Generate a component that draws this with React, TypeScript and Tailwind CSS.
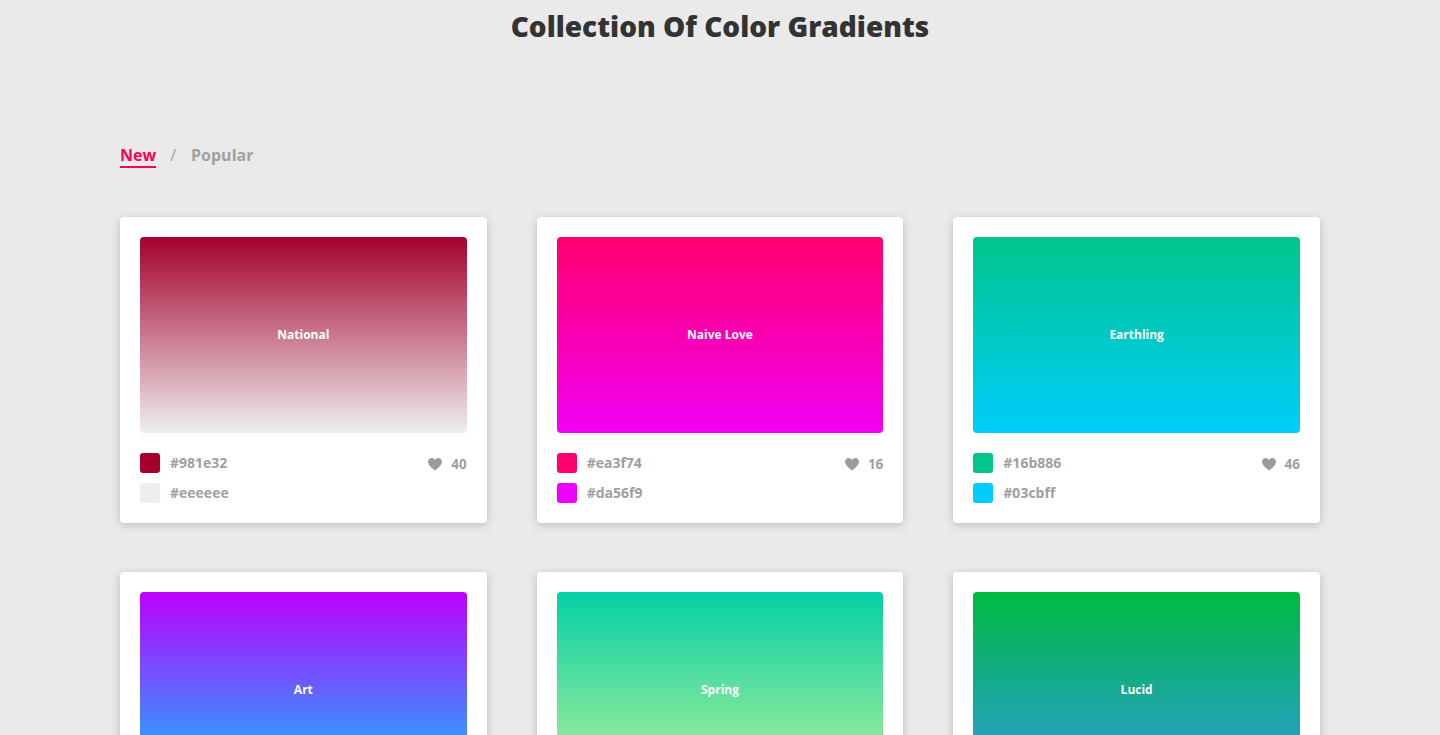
const cards = [
  { name: "National", from: "#a4002c", to: "#efefef", c1: "#981e32", c2: "#eeeeee", s1: "#a6002c", s2: "#eeeeee", likes: 40 },
  { name: "Naive Love", from: "#ff006e", to: "#f100f5", c1: "#ea3f74", c2: "#da56f9", s1: "#ff006e", s2: "#ee00ff", likes: 16 },
  { name: "Earthling", from: "#00c58c", to: "#00cdfc", c1: "#16b886", c2: "#03cbff", s1: "#00c58c", s2: "#00cdff", likes: 46 },
  { name: "Art", from: "#bd00ff", to: "#0ac5ff", c1: "#b307fd", c2: "#0ac5ff", s1: "#bd00ff", s2: "#0ac5ff", likes: 22 },
  { name: "Spring", from: "#04d0a6", to: "#b7f098", c1: "#0fd1a4", c2: "#b7f098", s1: "#04d0a6", s2: "#b7f098", likes: 31 },
  { name: "Lucid", from: "#00ba40", to: "#2f99e4", c1: "#0db848", c2: "#2f99e4", s1: "#00ba40", s2: "#2f99e4", likes: 18 },
];

function Card({ card }: { card: (typeof cards)[number] }) {
  return (
    <div className="rounded-[4px] bg-white p-5 shadow-[0_2px_10px_rgba(0,0,0,0.2)]">
      <div
        className="flex h-[196px] items-center justify-center rounded-[4px] text-xs font-bold text-white"
        style={{ backgroundImage: `linear-gradient(to bottom, ${card.from}, ${card.to})` }}
      >
        {card.name}
      </div>
      <div className="mt-5 flex justify-between">
        <div className="flex flex-col gap-2.5">
          {[
            [card.s1, card.c1],
            [card.s2, card.c2],
          ].map(([swatch, label]) => (
            <div key={label} className="flex h-5 items-center gap-2.5">
              <span className="h-5 w-5 rounded-[3px]" style={{ backgroundColor: swatch }} />
              <span className="pb-[2px] text-[14px] font-bold text-[#a0a0a0]">{label}</span>
            </div>
          ))}
        </div>
        <div className="flex h-[22px] items-center gap-[9px] text-[13.5px] font-bold text-[#a0a0a0]">
          <svg width="14" height="13" viewBox="0 0 14 13" fill="#9b9b9b">
            <path d="M7 12.6 C5.5 11.2 0 7.6 0 3.8 C0 1.6 1.7 0 3.7 0 C5.1 0 6.3 0.8 7 2 C7.7 0.8 8.9 0 10.3 0 C12.3 0 14 1.6 14 3.8 C14 7.6 8.5 11.2 7 12.6 Z" />
          </svg>
          <span>{card.likes}</span>
        </div>
      </div>
    </div>
  );
}

export default function App() {
  return (
    <div className="h-[735px] overflow-hidden bg-[#eaeaea] font-['Open_Sans',sans-serif]">
      <h1 className="pt-[7px] text-center text-[28px] leading-[38px] font-extrabold text-[#333333]">
        Collection Of Color Gradients
      </h1>
      <main className="mx-auto mt-[99px] w-[1200px]">
        <nav className="flex items-start text-[16px] leading-[22px] font-bold text-[#a0a0a0]">
          <span className="border-b-2 border-[#ff0058] text-[#ff0058]">New</span>
          <span className="ml-[14px] font-normal">/</span>
          <span className="ml-[15px]">Popular</span>
        </nav>
        <div className="mt-[49px] grid grid-cols-3 gap-x-[50px] gap-y-[49px]">
          {cards.map((card) => (
            <Card key={card.name} card={card} />
          ))}
        </div>
      </main>
    </div>
  );
}
